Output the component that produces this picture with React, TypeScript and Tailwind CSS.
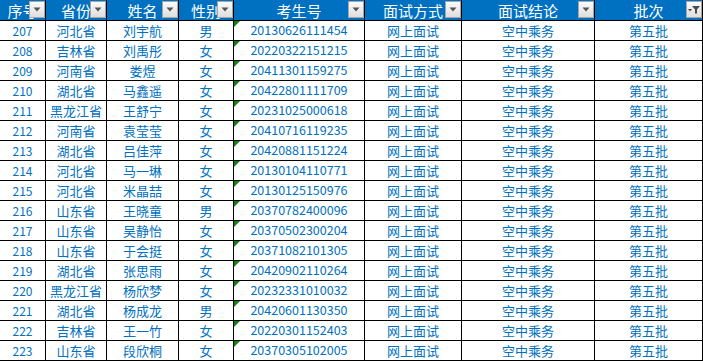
import React from 'react';

const cols = [
  { title: '序号', w: 'w-[46px]' },
  { title: '省份', w: 'w-[61px]' },
  { title: '姓名', w: 'w-[72px]' },
  { title: '性别', w: 'w-[55px]' },
  { title: '考生号', w: 'w-[131px]' },
  { title: '面试方式', w: 'w-[97px]' },
  { title: '面试结论', w: 'w-[133px]' },
  { title: '批次', w: 'w-[108px]', filtered: true },
];

const rows: [string, string, string, string, string][] = [
  ['207', '河北省', '刘宇航', '男', '20130626111454'],
  ['208', '吉林省', '刘禹彤', '女', '20220322151215'],
  ['209', '河南省', '娄煜', '女', '20411301159275'],
  ['210', '湖北省', '马鑫遥', '女', '20422801111709'],
  ['211', '黑龙江省', '王舒宁', '女', '20231025000618'],
  ['212', '河南省', '袁莹莹', '女', '20410716119235'],
  ['213', '湖北省', '吕佳萍', '女', '20420881151224'],
  ['214', '河北省', '马一琳', '女', '20130104110771'],
  ['215', '河北省', '米晶喆', '女', '20130125150976'],
  ['216', '山东省', '王晓童', '男', '20370782400096'],
  ['217', '山东省', '吴静怡', '女', '20370502300204'],
  ['218', '山东省', '于会挺', '女', '20371082101305'],
  ['219', '湖北省', '张思雨', '女', '20420902110264'],
  ['220', '黑龙江省', '杨欣梦', '女', '20232331010032'],
  ['221', '湖北省', '杨成龙', '男', '20420601130350'],
  ['222', '吉林省', '王一竹', '女', '20220301152403'],
  ['223', '山东省', '段欣桐', '女', '20370305102005'],
];

const cell = 'shrink-0 border-r border-b border-black flex items-center justify-center whitespace-nowrap';

function FilterButton({ filtered }: { filtered?: boolean }) {
  return (
    <div className="absolute top-[1px] right-0 w-[16px] h-[17px] border border-[#a6a6a6] bg-gradient-to-b from-[#fbfbfb] to-[#dedede] flex items-center justify-center">
      {filtered ? (
        <svg width="12" height="9" viewBox="0 0 12 9">
          <path d="M0 4h4l-2 2.5z" fill="#4a4a4a" />
          <path d="M4 1h8L9 4.5V8.5H7V4.5z" fill="#4a4a4a" />
        </svg>
      ) : (
        <svg width="8" height="5" viewBox="0 0 8 5">
          <path d="M0.5 0.5h7L4 4.5z" fill="#555" />
        </svg>
      )}
    </div>
  );
}

export default function App() {
  return (
    <div className="w-[703px] h-[361px] bg-white overflow-hidden font-['Noto_Sans_CJK_SC',sans-serif]">
      <div className="flex h-[21px]">
        {cols.map(c => (
          <div
            key={c.title}
            className={`${c.w} ${cell} relative bg-[#0070c0] overflow-hidden text-white text-[15px] leading-none`}
          >
            <span>{c.title}</span>
            <FilterButton filtered={c.filtered} />
          </div>
        ))}
      </div>
      {rows.map(r => (
        <div key={r[0]} className="flex h-[20px] text-[#0070c0] text-[13px]">
          <div className={`w-[46px] ${cell} text-[12px]`}>{r[0]}</div>
          <div className={`w-[61px] ${cell}`}>{r[1]}</div>
          <div className={`w-[72px] ${cell}`}>{r[2]}</div>
          <div className={`w-[55px] ${cell}`}>{r[3]}</div>
          <div className={`w-[131px] ${cell} relative text-[12.5px]`}>
            <span className="absolute top-0 left-0 w-0 h-0 border-t-[6px] border-t-[#118011] border-r-[6px] border-r-transparent" />
            {r[4]}
          </div>
          <div className={`w-[97px] ${cell}`}>网上面试</div>
          <div className={`w-[133px] ${cell}`}>空中乘务</div>
          <div className={`w-[108px] ${cell}`}>第五批</div>
        </div>
      ))}
    </div>
  );
}
